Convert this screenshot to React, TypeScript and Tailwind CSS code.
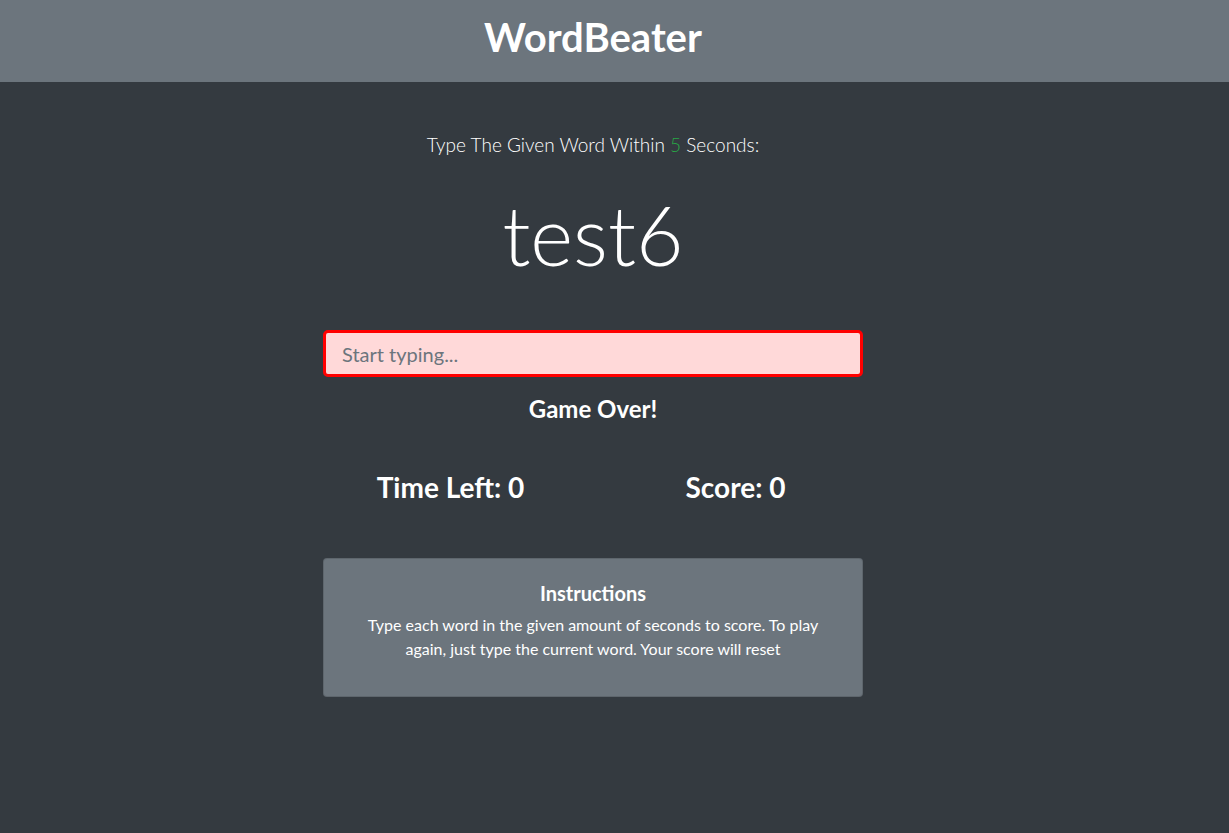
import React from "react";

export default function App() {
  return (
    <div className="min-h-[833px] w-full bg-[#343a40] text-white font-['Lato','Noto_Sans',sans-serif]">
      <header className="h-[82px] w-full bg-[#6c757d]">
        <div className="w-[1186px] h-full flex items-center justify-center pb-[9px]">
          <h1 className="text-[40px] leading-[48px] font-bold">WordBeater</h1>
        </div>
      </header>
      <main className="w-[1186px] flex flex-col items-center">
        <p className="mt-[48px] h-[30px] text-[19px] leading-[30px] font-light">
          Type The Given Word Within <span className="text-[#28a745]">5</span> Seconds:
        </p>
        <h2 className="mt-[21px] h-[106px] text-[82px] leading-[106px] font-light">test6</h2>
        <div className="mt-[43px] w-[540px]">
          <input
            className="w-full h-[47px] rounded-[5px] border-[3px] border-[#ff0000] bg-[#ffd9d9] px-4 text-[20px] text-[#495057] placeholder:text-[#6c757d] outline-none"
            placeholder="Start typing..."
          />
        </div>
        <h5 className="mt-[17px] text-[24px] leading-[29px] font-bold">Game Over!</h5>
        <div className="mt-[47px] w-[570px] grid grid-cols-2">
          <h3 className="text-center text-[28px] leading-[34px] font-bold">Time Left: 0</h3>
          <h3 className="text-center text-[28px] leading-[34px] font-bold">Score: 0</h3>
        </div>
        <div className="mt-[54px] w-[540px] rounded-[4px] border border-[rgba(0,0,0,0.125)] bg-[#6c757d] px-[39px] pt-[22px] pb-[19px] text-center">
          <h5 className="text-[20px] leading-[24px] font-bold mb-2">Instructions</h5>
          <p className="text-[16px] leading-[24px] mb-4">
            Type each word in the given amount of seconds to score. To play again, just type the current word. Your score will reset
          </p>
        </div>
      </main>
    </div>
  );
}
